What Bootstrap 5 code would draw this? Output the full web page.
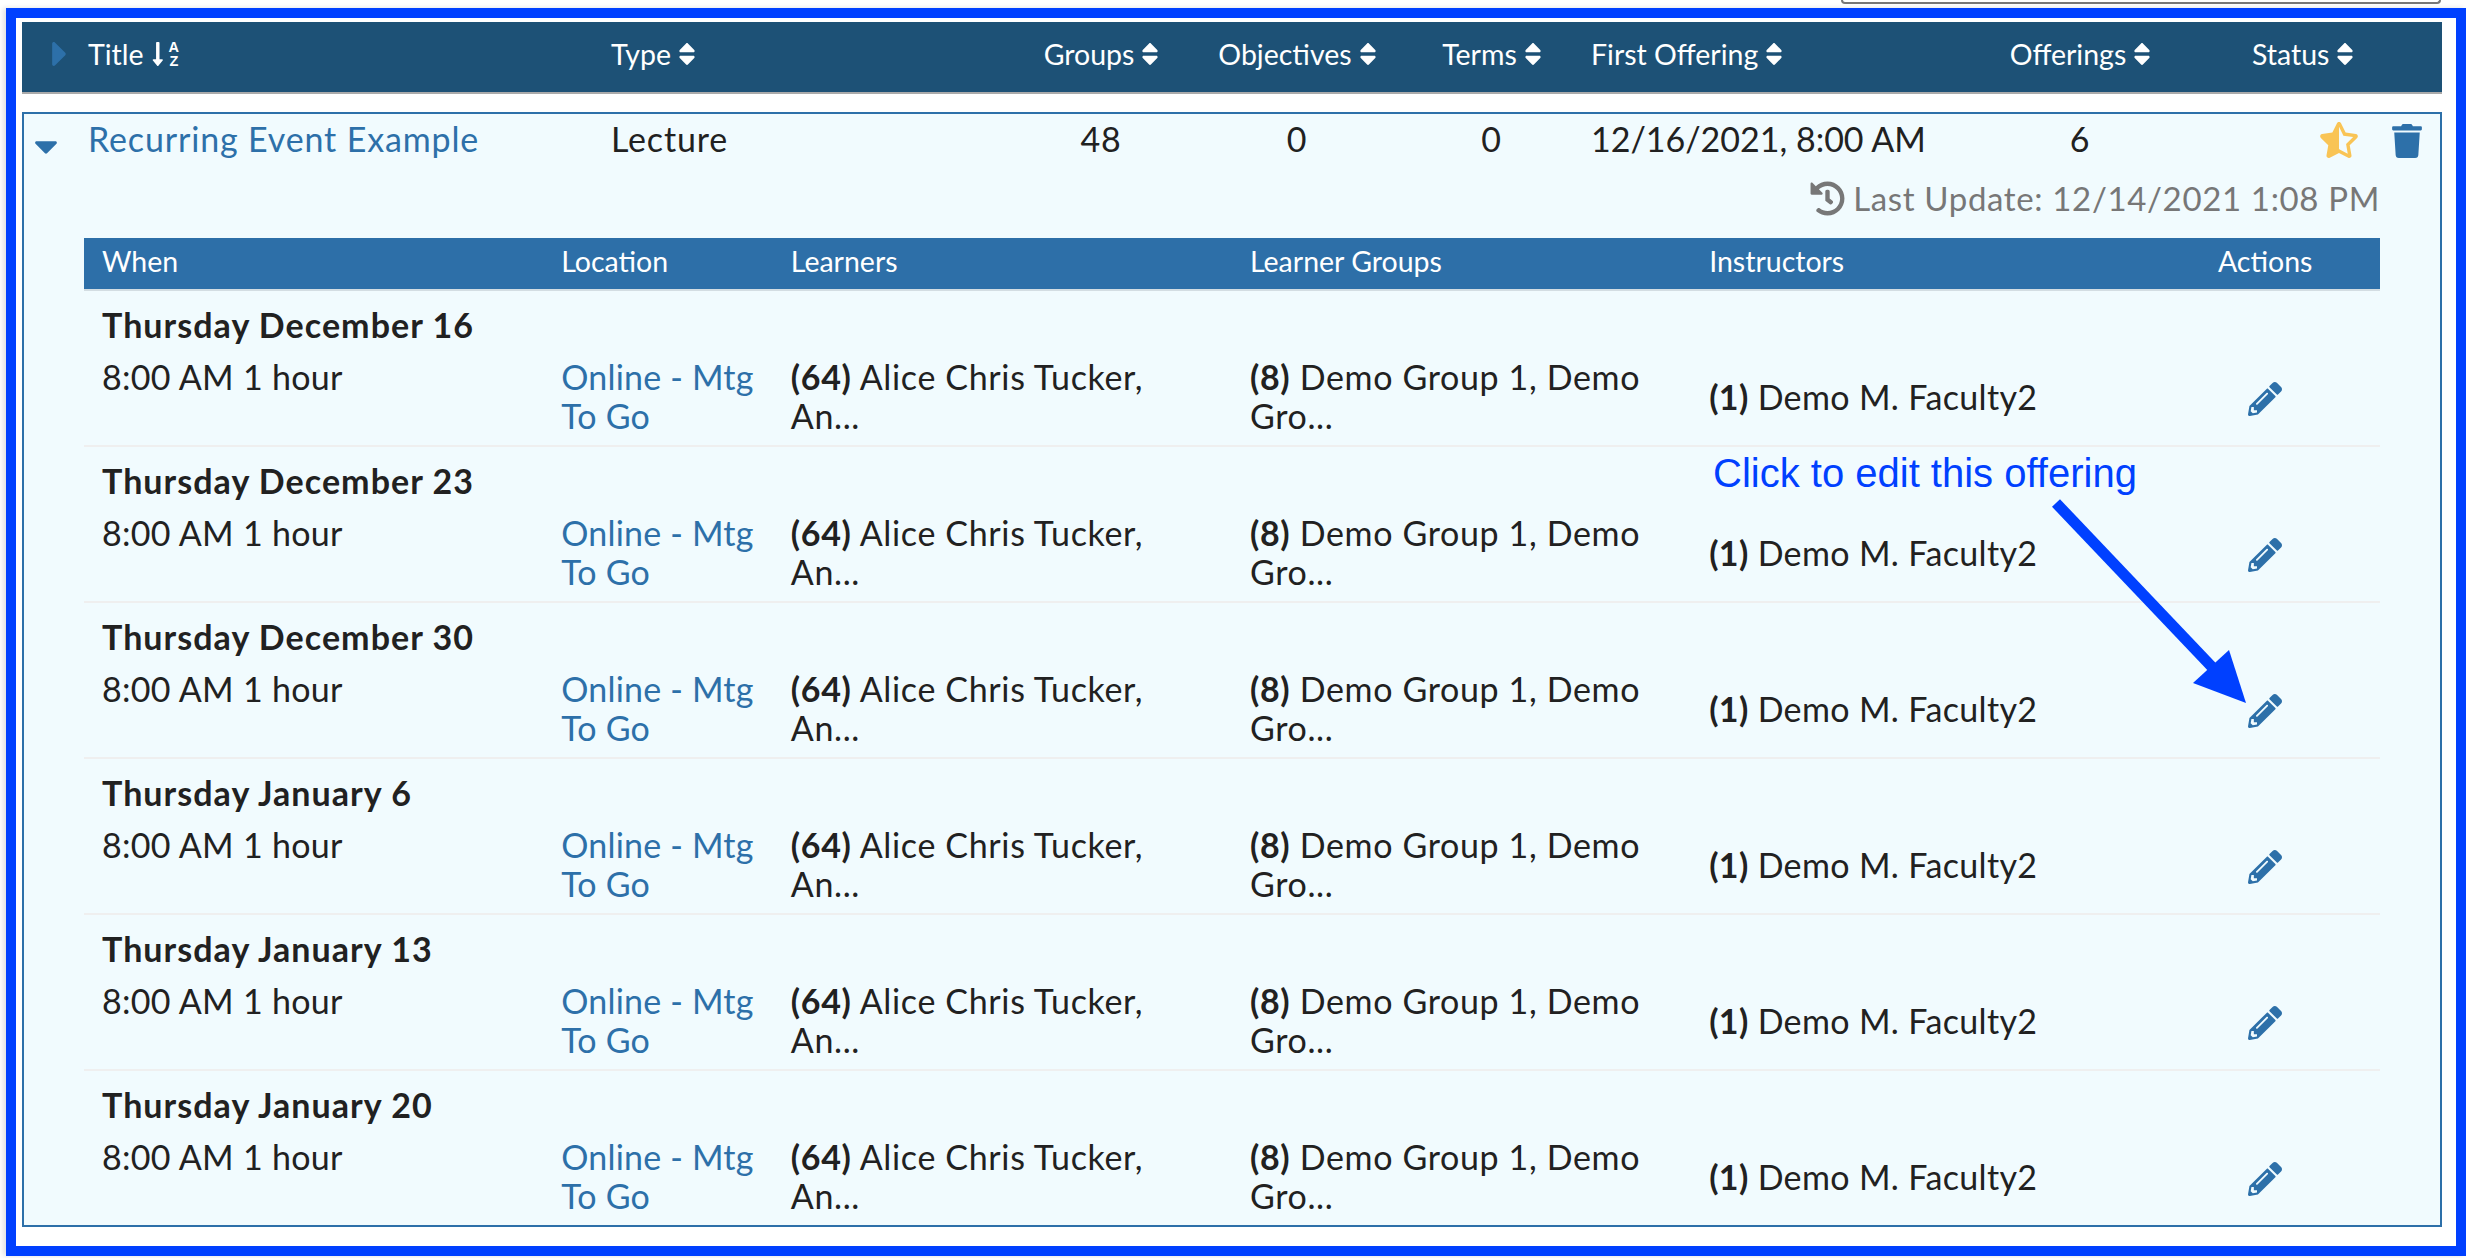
<!DOCTYPE html>
<html>
<head>
    <meta charset="UTF-8">
    <link href="https://cdn.jsdelivr.net/npm/bootstrap@5.3.0/dist/css/bootstrap.min.css" rel="stylesheet">
    <style>
        body {
            margin: 0;
            width: 2466px;
            height: 1258px;
            overflow: hidden;
            background: #fff;
            font-family: "Lato", "Noto Sans", sans-serif;
            font-size: 34px;
            line-height: 39px;
            letter-spacing: .85px;
            color: #212121;
        }
        a { color: #2d70a9; text-decoration: none; }

        .top-strip { height: 8px; padding-right: 25px; }
        .filter-edge {
            width: 600px;
            height: 4px;
            border: 2px solid #777;
            border-top: 0;
            border-radius: 0 0 4px 4px;
        }

        /* blue frame drawn round the screenshot */
        .shot-frame {
            margin-left: 6px;
            height: 1248px;
            padding: 4px 14px 0 6px;
            border: 10px solid #0040ff;
            box-shadow: -3px 0 5px rgba(0, 0, 0, .12);
        }

        .course-cols {
            display: grid;
            grid-template-columns: 66px 523px 389px 202px 190px 199px 379px 220px 252px;
        }
        .list-head {
            height: 72px;
            padding-bottom: 6px;
            background: #1d5176;
            border-bottom: 2px solid #aaa;
            color: #fff;
            font-size: 28.5px;
            letter-spacing: 0;
        }
        .list-head svg { fill: #fff; }
        .head-caret { padding-left: 30px; }
        .sort-ico { width: 16px; height: 22px; }
        .az-letters {
            font-family: "Liberation Sans", sans-serif;
            font-size: 14.5px;
            font-weight: 700;
            line-height: 14px;
            margin-left: -3px;
        }
        .shift-s { padding-left: 62px; }

        .course-box {
            margin-top: 18px;
            height: 1115px;
            border: 2px solid #2d70a9;
            background: #f1fbfe;
        }
        .course-row { margin: 0 -2px; padding-top: 5px; }
        .row-caret { padding: 18px 0 0 13px; }
        .row-acts { height: 39px; padding: 3px 20px 0 0; gap: 34px; }
        .trash-ico { margin-top: 2px; }
        .nums { letter-spacing: 0; }
        .last-update {
            margin: 21px 60px 0 0;
            color: #777;
            font-size: 33px;
            letter-spacing: .65px;
        }
        .last-update svg { fill: #777; width: 35px; height: 35px; }

        .offer-wrap { margin: 20px 60px 0; }
        .offer-list {
            table-layout: fixed;
            margin: 0;
            --bs-table-bg: transparent;
            --bs-table-color: #212121;
        }
        .offer-list th {
            height: 52px;
            padding: 0 18px 4px;
            background: #2d6fa8;
            border-bottom: 2px solid #d3dde2;
            color: #fff;
            font-size: 28.5px;
            font-weight: 400;
            letter-spacing: 0;
            vertical-align: middle;
        }
        .offer-list td {
            padding: 0 18px;
            border: 0;
            white-space: nowrap;
            letter-spacing: .65px;
        }
        .offer-list .date-cell { padding-top: 14px; font-weight: 700; letter-spacing: 1.05px; }
        .offer-list .detail-row td { padding-top: 13px; padding-bottom: 10px; border-bottom: 2px solid #efefef; }
        .offer-list tbody tr:last-child td { border-bottom: 0; }
        .offer-list .detail-row .loc-cell { letter-spacing: .2px; }
        .offer-list .detail-row .inst-cell { padding-top: 15px; padding-bottom: 11px; letter-spacing: .35px; }
        .offer-list .detail-row .act-cell { padding-top: 12px; padding-bottom: 11px; }
        .offer-list .detail-row .time-cell { letter-spacing: .3px; }
        .wide-col { width: 20%; }
        .thin-col { width: 10%; }
        .pencil-ico { width: 34px; height: 34px; fill: #2d70a9; }

        /* annotation added on top of the screenshot */
        .note-text {
            position: absolute;
            left: 1713px;
            top: 450px;
            font-family: "Liberation Sans", sans-serif;
            font-size: 40px;
            line-height: 46px;
            letter-spacing: 0;
            color: #0040ff;
        }
        .note-arrow { position: absolute; left: 0; top: 0; width: 2466px; height: 1258px; pointer-events: none; }
    </style>
</head>
<body>
    <div class="top-strip d-flex justify-content-end"><div class="filter-edge"></div></div>

    <div class="shot-frame">
        <div class="list-head course-cols align-items-center">
            <div class="head-caret">
                <svg class="d-block" style="fill:#2d70a9" width="14" height="24" viewBox="0 107 170 298"><path d="M0 384.662V127.338c0-17.818 21.543-26.727 34.142-14.142l128.662 128.662c7.81 7.81 7.81 20.474 0 28.284L34.142 398.804C21.543 411.389 0 402.48 0 384.662z"/></svg>
            </div>
            <div class="d-flex align-items-center gap-2">Title
                <svg width="12" height="24" viewBox="0 32 200 448"><path d="M176 352h-48V48a16 16 0 0 0-16-16H80a16 16 0 0 0-16 16v304H16c-14.19 0-21.36 17.24-11.29 27.31l80 96a16 16 0 0 0 22.62 0l80-96C197.35 369.26 190.22 352 176 352z"/></svg>
                <span class="az-letters text-center">A<br>Z</span>
            </div>
            <div class="d-flex align-items-center gap-2">Type <svg class="sort-ico"><use href="#i-sort"/></svg></div>
            <div class="d-flex align-items-center justify-content-center gap-2">Groups <svg class="sort-ico"><use href="#i-sort"/></svg></div>
            <div class="d-flex align-items-center justify-content-center gap-2">Objectives <svg class="sort-ico"><use href="#i-sort"/></svg></div>
            <div class="d-flex align-items-center justify-content-center gap-2">Terms <svg class="sort-ico"><use href="#i-sort"/></svg></div>
            <div class="d-flex align-items-center gap-2">First Offering <svg class="sort-ico"><use href="#i-sort"/></svg></div>
            <div class="d-flex align-items-center justify-content-center gap-2">Offerings <svg class="sort-ico"><use href="#i-sort"/></svg></div>
            <div class="d-flex align-items-center gap-2 shift-s">Status <svg class="sort-ico"><use href="#i-sort"/></svg></div>
        </div>

        <div class="course-box">
            <div class="course-row course-cols align-items-center">
                <div class="row-caret">
                    <svg class="d-block" width="22" height="13" viewBox="10 190 300 172" fill="#2d70a9"><path d="M31.3 192h257.3c17.8 0 26.7 21.5 14.1 34.1L174.1 354.8c-7.8 7.8-20.5 7.8-28.3 0L17.2 226.1C4.6 213.5 13.5 192 31.3 192z"/></svg>
                </div>
                <div><a href="#">Recurring Event Example</a></div>
                <div>Lecture</div>
                <div class="text-center">48</div>
                <div class="text-center">0</div>
                <div class="text-center">0</div>
                <div class="nums">12/16/2021, 8:00 AM</div>
                <div class="text-center">6</div>
                <div class="d-flex justify-content-end align-items-start row-acts">
                    <svg width="38" height="36" viewBox="0 0 536 512" fill="#f9c455"><path d="M508.55 171.51L362.18 150.2 296.77 17.81C290.89 5.98 279.42 0 267.95 0c-11.4 0-22.79 5.9-28.69 17.81l-65.43 132.38-146.38 21.29c-26.25 3.8-36.77 36.09-17.74 54.59l105.89 103-25.06 145.48C86.98 495.33 103.57 512 122.15 512c4.93 0 10-1.17 14.87-3.75l130.95-68.68 130.94 68.7c4.86 2.55 9.92 3.71 14.83 3.71 18.6 0 35.22-16.61 31.66-37.4l-25.03-145.49 105.91-102.98c19.04-18.5 8.52-50.8-17.73-54.6zm-121.74 123.2l-18.12 17.62 4.28 24.88 19.52 113.45-102.13-53.59-22.38-11.74.03-317.19 51.03 103.29 11.18 22.63 25.01 3.64 114.23 16.63-82.65 80.38z"/></svg>
                    <svg class="trash-ico" width="30" height="34" viewBox="0 0 448 512" fill="#2d70a9"><path d="M432 32H312l-9.4-18.7A24 24 0 0 0 281.1 0H166.8a23.72 23.72 0 0 0-21.4 13.3L136 32H16A16 16 0 0 0 0 48v32a16 16 0 0 0 16 16h416a16 16 0 0 0 16-16V48a16 16 0 0 0-16-16zM53.2 467a48 48 0 0 0 47.9 45h245.8a48 48 0 0 0 47.9-45L416 128H32z"/></svg>
                </div>
            </div>

            <div class="last-update d-flex justify-content-end align-items-center gap-2">
                <svg viewBox="0 0 512 512"><path d="M504 255.531c.253 136.64-111.18 248.372-247.82 248.468-59.015.042-113.223-20.53-155.822-54.911-11.077-8.94-11.905-25.541-1.839-35.607l11.267-11.267c8.609-8.609 22.353-9.551 31.891-1.984C173.062 425.135 212.781 440 256 440c101.705 0 184-82.311 184-184 0-101.705-82.311-184-184-184-48.814 0-93.149 18.969-126.068 49.932l50.754 50.754c10.08 10.08 2.941 27.314-11.313 27.314H24c-8.837 0-16-7.163-16-16V38.627c0-14.254 17.234-21.393 27.314-11.314l49.372 49.372C129.209 34.136 189.552 8 256 8c136.81 0 247.747 110.78 248 247.531zm-180.912 78.784l9.823-12.63c8.138-10.463 6.253-25.542-4.21-33.679L288 256.349V152c0-13.255-10.745-24-24-24h-16c-13.255 0-24 10.745-24 24v135.651l65.409 50.874c10.463 8.137 25.541 6.253 33.679-4.21z"/></svg>
                <span>Last Update: 12/14/2021 1:08 PM</span>
            </div>

            <div class="offer-wrap">
                <table class="table offer-list">
                    <thead>
                        <tr>
                            <th class="wide-col">When</th>
                            <th class="thin-col">Location</th>
                            <th class="wide-col">Learners</th>
                            <th class="wide-col">Learner Groups</th>
                            <th class="wide-col">Instructors</th>
                            <th class="thin-col text-center">Actions</th>
                        </tr>
                    </thead>
                    <tbody id="offerBody"></tbody>
                </table>
            </div>
        </div>
    </div>

    <div class="note-text">Click to edit this offering</div>
    <svg class="note-arrow" viewBox="0 0 2466 1258">
        <line x1="2056" y1="503" x2="2212" y2="667" stroke="#0040ff" stroke-width="11"/>
        <path d="M2246 703 L2229 650 L2193 683 Z" fill="#0040ff"/>
    </svg>

    <svg class="d-none">
        <symbol id="i-sort" viewBox="10 57 300 398" preserveAspectRatio="none"><path d="M41 288h238c21.4 0 32.1 25.9 17 41L177 448c-9.4 9.4-24.6 9.4-33.9 0L24 329c-15.1-15.1-4.4-41 17-41zm255-105L177 64c-9.4-9.4-24.6-9.4-33.9 0L24 183c-15.1 15.1-4.4 41 17 41h238c21.4 0 32.1-25.9 17-41z"/></symbol>
    </svg>

    <script src="https://cdn.jsdelivr.net/npm/bootstrap@5.3.0/dist/js/bootstrap.bundle.min.js"></script>
    <script>
        const datas = ['Thursday December 16', 'Thursday December 23', 'Thursday December 30',
                       'Thursday January 6', 'Thursday January 13', 'Thursday January 20'];
        const lapis = 'M497.9 142.1l-46.1 46.1c-4.7 4.7-12.3 4.7-17 0l-111-111c-4.7-4.7-4.7-12.3 0-17l46.1-46.1c18.7-18.7 49.1-18.7 67.9 0l60.1 60.1c18.8 18.7 18.8 49.1 0 67.9zM284.2 99.8L21.6 362.4.4 483.9c-2.9 16.4 11.4 30.6 27.8 27.8l121.5-21.3 262.6-262.6c4.7-4.7 4.7-12.3 0-17l-111-111c-4.8-4.7-12.4-4.7-17.1 0zM124.1 339.9c-5.5-5.5-5.5-14.3 0-19.8l154-154c5.5-5.5 14.3-5.5 19.8 0s5.5 14.3 0 19.8l-154 154c-5.5 5.5-14.3 5.5-19.8 0zM88 424h48v36.3l-64.5 11.3-31.1-31.1L51.7 376H88v48z';
        const corpo = document.getElementById('offerBody');

        datas.forEach(d => {
            corpo.insertAdjacentHTML('beforeend', `
                <tr><td class="date-cell" colspan="6">${d}</td></tr>
                <tr class="detail-row">
                    <td class="align-top time-cell">8:00 AM 1 hour</td>
                    <td class="loc-cell"><a href="#">Online - Mtg<br>To Go</a></td>
                    <td><b>(64)</b> Alice Chris Tucker,<br>An...</td>
                    <td><b>(8)</b> Demo Group 1, Demo<br>Gro...</td>
                    <td class="align-middle inst-cell"><b>(1)</b> Demo M. Faculty2</td>
                    <td class="align-middle text-center act-cell"><svg class="pencil-ico" viewBox="0 0 512 512"><path d="${lapis}"/></svg></td>
                </tr>`);
        });
    </script>
</body>
</html>
